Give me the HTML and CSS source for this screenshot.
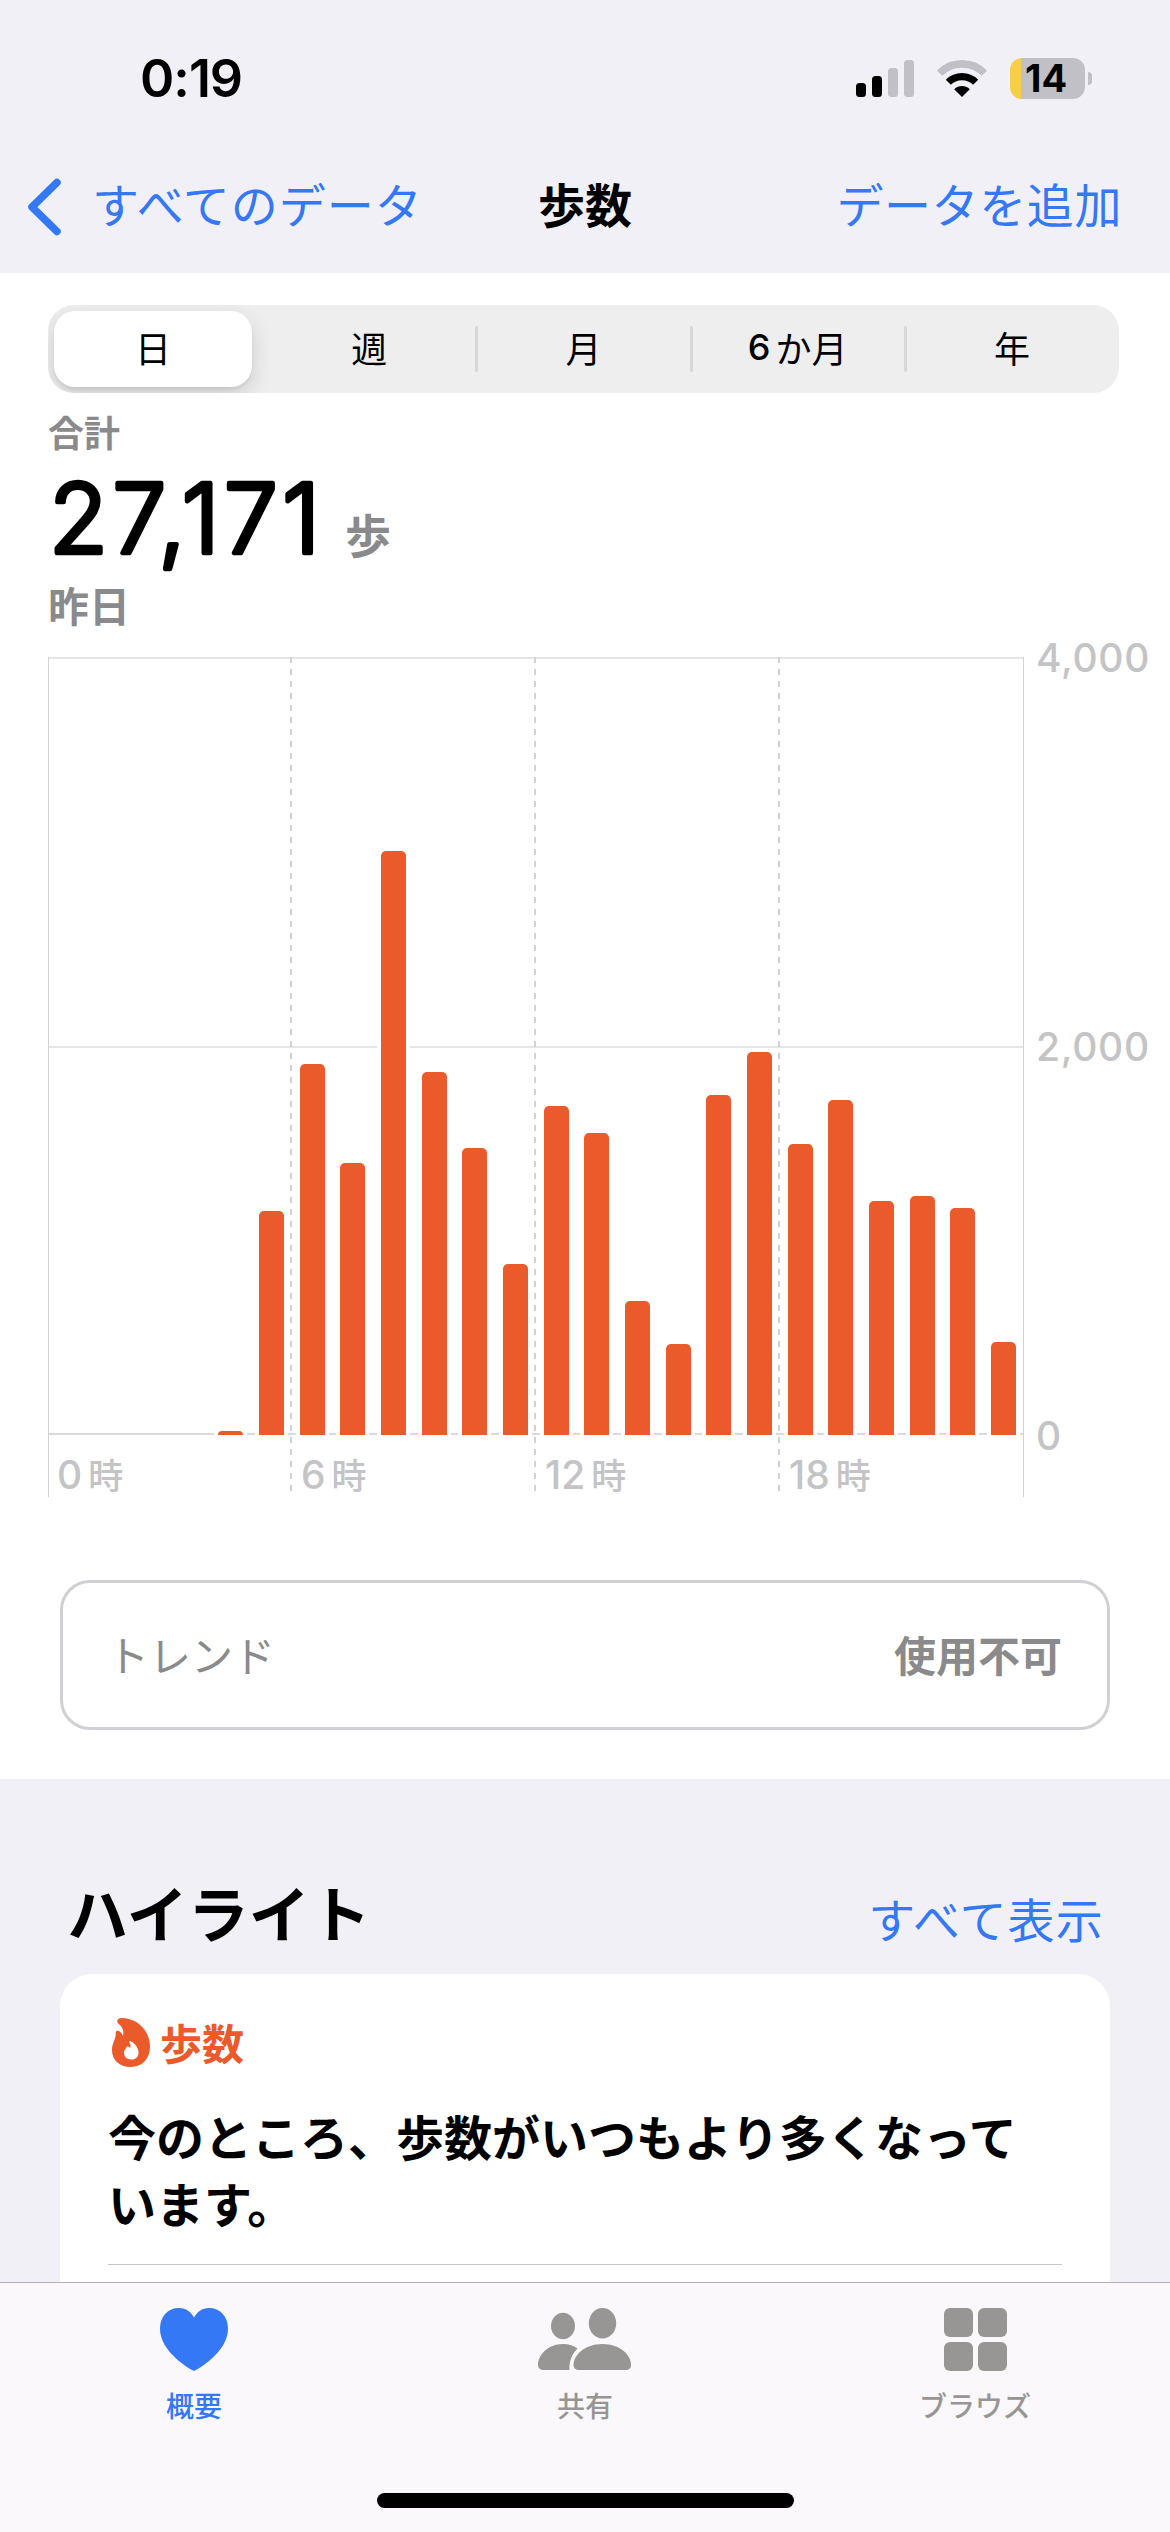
FILE: index.html
```html
<!DOCTYPE html>
<html lang="ja">
<head>
<meta charset="utf-8">
<title>歩数</title>
<link rel="stylesheet" href="styles.css">
</head>
<body>
<div class="screen">
  <header class="statusbar">
    <span class="clock">0:19</span>
    <div class="status-icons">
      <svg class="signal" width="58" height="37" viewBox="0 0 58 37">
        <rect x="0" y="23" width="10" height="14" rx="3.5" fill="#000"/>
        <rect x="16" y="16" width="10" height="21" rx="3.5" fill="#000"/>
        <rect x="32" y="8" width="10" height="29" rx="3.5" fill="#c1c0c6"/>
        <rect x="48" y="0" width="10" height="37" rx="3.5" fill="#c1c0c6"/>
      </svg>
      <svg class="wifi" width="50" height="37" viewBox="0 0 50 37">
        <path d="M2.600 13.200A31.500 31.500 0 0 1 47.400 13.200" fill="none" stroke="#c1c0c6" stroke-width="7.600"/>
        <path d="M11.300 22.200A19.500 19.500 0 0 1 38.700 22.200" fill="none" stroke="#000" stroke-width="7.200"/>
        <path d="M25 37L17.200 29.200C21.500 24.900 28.500 24.900 32.800 29.200Z" fill="#000"/>
      </svg>
      <div class="battery"><span class="battery-body">14</span><span class="battery-cap"></span></div>
    </div>
  </header>

  <nav class="navbar">
    <a class="back">
      <svg width="35" height="58" viewBox="0 0 35 58"><path d="M30 4.500L5 29L30 53.500" fill="none" stroke="#3478f6" stroke-width="7.500" stroke-linecap="round" stroke-linejoin="round"/></svg>
      <span>すべてのデータ</span>
    </a>
    <h1 class="nav-title">歩数</h1>
    <a class="add">データを追加</a>
  </nav>

  <main class="panel">
    <div class="segments">
      <span class="segment selected">日</span>
      <span class="segment">週</span>
      <span class="segment divided">月</span>
      <span class="segment divided"><b>6</b>か月</span>
      <span class="segment divided">年</span>
    </div>

    <section class="summary">
      <p class="summary-label">合計</p>
      <div class="summary-value">
        <svg class="number" width="277" height="122" viewBox="0 0 277 122"><text x="1" y="95" textLength="271">27,171</text></svg>
        <span class="unit">歩</span>
      </div>
      <p class="summary-date">昨日</p>
    </section>

    <section class="chart">
      <div class="plot">
        <div class="bars">
          <i></i><i></i><i></i><i></i>
          <i class="bar" style="height:4px"></i>
          <i class="bar" style="height:224px"></i>
          <i class="bar" style="height:371px"></i>
          <i class="bar" style="height:272px"></i>
          <i class="bar" style="height:584px"></i>
          <i class="bar" style="height:363px"></i>
          <i class="bar" style="height:287px"></i>
          <i class="bar" style="height:171px"></i>
          <i class="bar" style="height:329px"></i>
          <i class="bar" style="height:302px"></i>
          <i class="bar" style="height:134px"></i>
          <i class="bar" style="height:91px"></i>
          <i class="bar" style="height:340px"></i>
          <i class="bar" style="height:383px"></i>
          <i class="bar" style="height:291px"></i>
          <i class="bar" style="height:335px"></i>
          <i class="bar" style="height:234px"></i>
          <i class="bar" style="height:239px"></i>
          <i class="bar" style="height:227px"></i>
          <i class="bar" style="height:93px"></i>
        </div>
        <div class="hours">
          <span>0<em>時</em></span><span>6<em>時</em></span><span>12<em>時</em></span><span>18<em>時</em></span>
        </div>
      </div>
      <div class="scale"><span>4,000</span><span>2,000</span><span>0</span></div>
    </section>

    <section class="trend"><span>トレンド</span><strong>使用不可</strong></section>
  </main>

  <section class="highlights">
    <div class="highlights-head"><h2>ハイライト</h2><a>すべて表示</a></div>
    <article class="card">
      <div class="card-title">
        <svg width="38" height="49" viewBox="0 0 38 52" preserveAspectRatio="none">
          <path fill="#eb5a2a" fill-rule="evenodd" d="M9.500 0C25 0 38 13 38 30.500C38 43 30.500 52 18.500 52C7.500 52 0 45 0 34C0 26 3.800 24 3.800 15.500C3.800 13 6.500 13.200 8 14.600C9.300 15.800 10.300 17.300 11 18.800C12.200 14 11 9.500 6.500 6C4 3.800 5.200 0 9.500 0ZM18.200 24.300C20.500 24.800 26.500 30 26.500 36.500C26.500 41.500 23.500 44 19.200 44C15 44 12 41.500 12 37C12 33.500 14.500 32.500 14.500 30.500C16.200 29.800 17.500 30.800 18 32C19 30 18.500 27.500 17.200 25.500C17 24.700 17.500 24.200 18.200 24.300Z"/>
        </svg>
        <span>歩数</span>
      </div>
      <p class="card-text">今のところ、歩数がいつもより多くなっています。</p>
      <hr class="card-rule">
    </article>
  </section>

  <footer class="tabbar">
    <div class="tabs">
      <a class="tab active">
        <svg width="68" height="63" viewBox="0 0 68 63"><path fill="#3478f6" d="M34 63C31 62 0 44 0 21C0 8 8 0 19 0C26 0 31 4 34 9.500C37 4 42 0 49 0C60 0 68 8 68 21C68 44 37 62 34 63Z"/></svg>
        <span>概要</span>
      </a>
      <a class="tab">
        <svg width="94" height="63" viewBox="0 0 94 63"><g fill="#979694"><ellipse cx="25" cy="18" rx="12" ry="13.200"/><ellipse cx="64.500" cy="15.300" rx="13.700" ry="15.300"/><path d="M39.500 40.500C34 46 31 53 31.500 62H6C2.500 62 0 60.500 0 57C0 47 10 36 25 36C31 36 36 38 39.500 40.500Z"/><path d="M41.500 62C37.500 62 35.500 60.500 35.500 57C35.500 47 47 36 64.500 36C82 36 93 47 93 57C93 60.500 91 62 87.500 62Z"/></g></svg>
        <span>共有</span>
      </a>
      <a class="tab">
        <svg width="63" height="63" viewBox="0 0 63 63"><g fill="#979694"><rect width="29" height="29" rx="6"/><rect x="34" width="29" height="29" rx="6"/><rect y="34" width="29" height="29" rx="6"/><rect x="34" y="34" width="29" height="29" rx="6"/></g></svg>
        <span>ブラウズ</span>
      </a>
    </div>
    <div class="home-indicator"></div>
  </footer>
</div>
</body>
</html>
```
FILE: styles.css
```css
* { box-sizing: border-box; }
body { margin: 0; }
h1, h2, p { margin: 0; font-weight: inherit; }
em, i { font-style: normal; }
svg { display: block; flex: none; }

.screen {
  display: flex;
  flex-direction: column;
  width: 1170px;
  height: 2532px;
  overflow: hidden;
  background: #f1f0f6;
  color: #000;
  font-family: Inter, "Noto Sans CJK JP", sans-serif;
  white-space: nowrap;
}

/* Status bar */
.statusbar {
  display: flex;
  justify-content: space-between;
  align-items: center;
  height: 156px;
  padding: 0 78px 0 140px;
}
.clock { font-size: 52px; font-weight: 600; letter-spacing: -1px; }
.status-icons { display: flex; align-items: center; gap: 23px; }
.battery { display: flex; align-items: center; gap: 3px; }
.battery-body {
  width: 75px;
  height: 41px;
  padding-left: 15px;
  border-radius: 12px;
  background: linear-gradient(90deg, #f7ce46 11px, #c1c0c6 11px);
  font-size: 38px;
  font-weight: 650;
  line-height: 41px;
}
.battery-cap { width: 4px; height: 13px; border-radius: 0 6px 6px 0; background: #c1c0c6; }

/* Navigation */
.navbar {
  display: grid;
  grid-template-columns: 1fr auto 1fr;
  align-items: center;
  height: 117px;
  padding: 0 48px 15px;
  font-size: 47px;
  line-height: 58px;
  color: #3478f6;
}
.navbar span, .nav-title, .add { padding-bottom: 2px; }
.back { display: flex; align-items: center; gap: 30px; margin-left: -21px; letter-spacing: 1px; }
.nav-title { font-size: 47px; font-weight: 700; color: #000; }
.add { justify-self: end; letter-spacing: .6px; }

/* White data panel */
.panel { height: 1506px; padding-top: 32px; background: #fff; }
.segments {
  display: grid;
  grid-template-columns: repeat(5, 1fr);
  width: 1071px;
  height: 88px;
  margin-left: 48px;
  border-radius: 26px;
  background: #eeeeef;
  overflow: hidden;
}
.segment {
  display: flex;
  align-items: center;
  justify-content: center;
  position: relative;
  padding-bottom: 4px;
  font-size: 36px;
}
.segment b { margin-right: 5px; font-weight: 450; }
.segment.selected {
  margin: 6px 10px 6px 6px;
  border-radius: 21px;
  background: #fff;
  box-shadow: 0 8px 22px rgba(0, 0, 0, .14), 0 3px 3px rgba(0, 0, 0, .06);
}
.segment.divided::before {
  content: "";
  position: absolute;
  left: -1px;
  top: 21px;
  width: 3px;
  height: 46px;
  border-radius: 2px;
  background: #d7d7d9;
}

.summary { height: 264px; padding: 17px 0 0 48px; color: #8a8a8c; font-weight: 700; }
.summary-label { font-size: 36px; line-height: 48px; }
.summary-value { display: flex; gap: 20px; height: 121px; }
.number text {
  font-size: 96px;
  font-weight: 300;
  fill: #000;
  stroke: #000;
  stroke-width: 4.5px;
  stroke-linejoin: round;
}
.unit { padding-top: 45px; font-size: 46px; line-height: 66px; }
.summary-date { font-size: 41px; line-height: 56px; }

/* Chart */
.chart { display: flex; height: 840px; padding-left: 48px; }
.plot {
  width: 976px;
  height: 840px;
  background:
    linear-gradient(#d2d2d4, #d2d2d4) 0 0 / 1px 100%,
    linear-gradient(#d2d2d4, #d2d2d4) 100% 0 / 1px 100%,
    repeating-linear-gradient(#d2d1d8 0 6px, transparent 6px 12px) 242px 0 / 2px 100%,
    repeating-linear-gradient(#d2d1d8 0 6px, transparent 6px 12px) 486px 0 / 2px 100%,
    repeating-linear-gradient(#d2d1d8 0 6px, transparent 6px 12px) 730px 0 / 2px 100%,
    linear-gradient(#e5e5e6, #e5e5e6) 0 0 / 100% 2px,
    linear-gradient(#e5e5e6, #e5e5e6) 0 389px / 100% 2px,
    linear-gradient(#dadadc, #dadadc) 0 776px / 100% 2px;
  background-repeat: no-repeat;
}
.bars {
  display: grid;
  grid-template-columns: repeat(24, 1fr);
  align-items: end;
  justify-items: center;
  height: 778px;
}
.bar {
  width: 25px;
  border-radius: 5px 5px 0 0;
  background: #eb5a2a;
  box-shadow: -4px 0 #fff, 4px 0 #fff;
}
.hours {
  display: grid;
  grid-template-columns: repeat(4, 244px);
  padding-left: 9px;
  font-size: 39px;
  font-weight: 450;
  line-height: 79px;
  color: #c4c4c6;
}
.hours em { margin-left: 6px; font-size: 35px; font-weight: 500; }
.scale {
  display: flex;
  flex-direction: column;
  justify-content: space-between;
  height: 824px;
  margin: -22px 0 0 12px;
  font-size: 39px;
  font-weight: 450;
  line-height: 46px;
  letter-spacing: .7px;
  color: #c4c4c6;
}

/* Trend */
.trend {
  display: flex;
  align-items: center;
  justify-content: space-between;
  width: 1050px;
  height: 150px;
  margin: 83px 0 0 60px;
  padding: 0 45px 3px 44px;
  border: 3px solid #d0d0d5;
  border-radius: 30px;
  font-size: 42px;
  color: #8a8a8c;
}
.trend strong { font-weight: 700; }

/* Highlights */
.highlights { flex: 1; padding: 92px 60px 0; overflow: hidden; }
.highlights-head {
  display: flex;
  justify-content: space-between;
  align-items: baseline;
  height: 103px;
  padding: 0 6px 0 7px;
}
.highlights-head h2 { font-size: 61px; font-weight: 700; line-height: 90px; }
.highlights-head a { font-size: 47px; letter-spacing: 1.2px; color: #3478f6; }
.card { height: 360px; padding: 42px 48px 0; border-radius: 32px; background: #fff; }
.card-title {
  display: flex;
  align-items: center;
  gap: 10px;
  height: 52px;
  padding-left: 4px;
  font-size: 42px;
  font-weight: 700;
  color: #eb5a2a;
}
.card-title span { padding-bottom: 1px; }
.card-text {
  margin-top: 37px;
  font-size: 48px;
  font-weight: 700;
  line-height: 67px;
  white-space: normal;
}
.card-rule { height: 1px; margin: 25px 0 0; border: 0; background: #c6c6c8; }

/* Tab bar */
.tabbar {
  display: flex;
  flex-direction: column;
  align-items: center;
  justify-content: space-between;
  height: 250px;
  padding-bottom: 24px;
  border-top: 1px solid #b5b1b5;
  background: #faf8fa;
}
.tabs { display: grid; grid-template-columns: repeat(3, 390px); }
.tab {
  display: flex;
  flex-direction: column;
  align-items: center;
  gap: 16px;
  padding-top: 25px;
  font-size: 28px;
  font-weight: 500;
  line-height: 40px;
  color: #979694;
}
.tab.active { padding-right: 2px; color: #3478f6; }
.home-indicator { width: 417px; height: 15px; border-radius: 8px; background: #000; }
```
